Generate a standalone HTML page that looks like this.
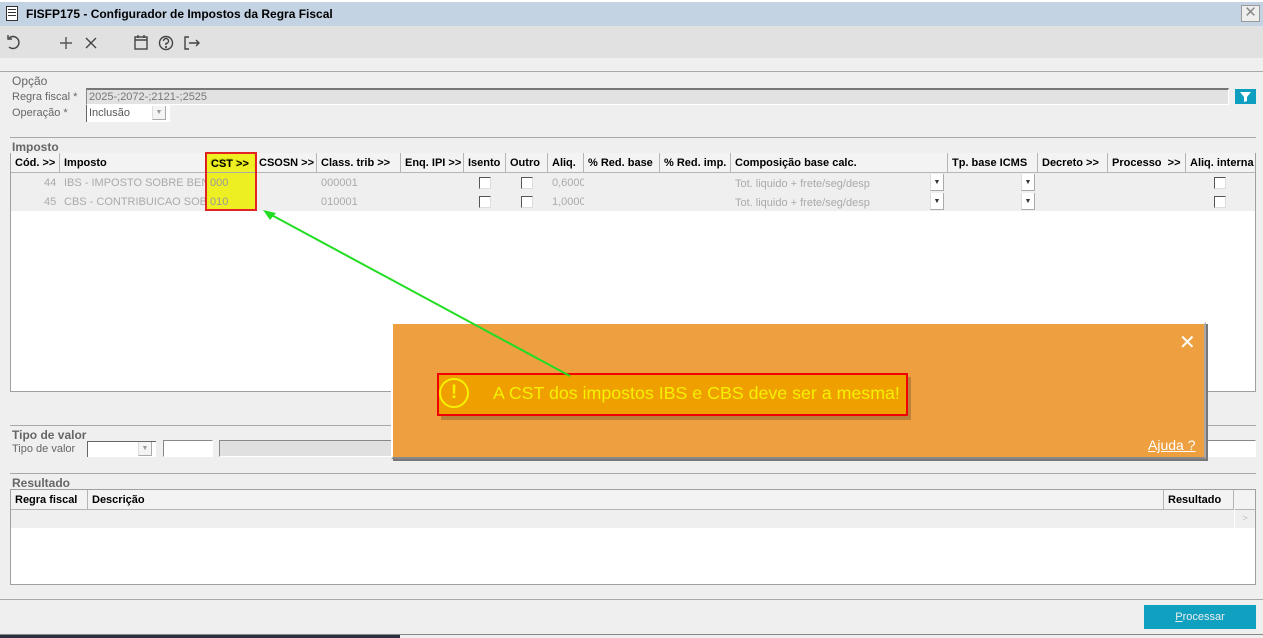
<!DOCTYPE html>
<html><head><meta charset="utf-8">
<style>
*{box-sizing:border-box;margin:0;padding:0}
body{width:1263px;height:638px;overflow:hidden;background:#efefef;font-family:"Liberation Sans",Arial,sans-serif;font-size:11px;position:relative;color:#000}
.a{position:absolute}
.lbl{color:#666;font-size:11px}
.sec{color:#666;font-size:12px;font-weight:bold}
.hr{position:absolute;height:1px;background:#a8a8a8}
.th{position:absolute;top:153px;height:20px;border-right:1px solid #b5b5b5;border-bottom:1px solid #b5b5b5;background:#f3f3f3;font-weight:bold;font-size:11px;line-height:21px;padding-left:4px;white-space:nowrap;overflow:hidden}
.cell{position:absolute;color:#aaa;font-size:11px;white-space:nowrap;overflow:hidden}
.cb{position:absolute;width:12px;height:12px;border:1px solid #555;border-right-color:#ddd;border-bottom-color:#ddd;background:#fff}
.dd{position:absolute;width:14px;height:17px;background:#fff;border-left:1px solid #ddd;border-right:1px solid #aaa;border-bottom:1px solid #aaa;font-size:7px;text-align:center;line-height:17px;color:#333}
</style></head><body>
<div class="a" style="left:0;top:0;width:1263px;height:2px;background:#fff"></div>
<div class="a" style="left:0;top:2px;width:1263px;height:24px;background:#c4d3e3"></div>
<div class="a" style="left:6px;top:6px;width:12px;height:15px;border:1px solid #333;background:#fff"></div>
<div class="a" style="left:8px;top:9px;width:8px;height:9px;background:repeating-linear-gradient(#333 0 1px,#fff 1px 3px)"></div>
<div class="a" style="left:26px;top:7px;font-size:12px;font-weight:bold">FISFP175 - Configurador de Impostos da Regra Fiscal</div>
<div class="a" style="left:1241px;top:5px;width:19px;height:17px;border:1px solid #999;background:#eee;color:#888;font-size:15px;line-height:14px;text-align:center">✕</div>
<div class="a" style="left:0;top:26px;width:1263px;height:32px;background:#e1e1e1"></div>
<svg class="a" style="left:0;top:26px" width="210" height="32" viewBox="0 0 210 32" fill="none" stroke="#444" stroke-width="1.4">
<path d="M9 12 A6 6 0 1 1 9 21"/><path d="M8 9 V13 H12"/>
<path d="M66 11 V23 M60 17 H72" stroke="#555"/>
<path d="M86 12 L96 22 M96 12 L86 22"/>
<rect x="135" y="11" width="12" height="12"/><path d="M135 14 H147 M138 9 V12 M144 9 V12"/>
<circle cx="166" cy="17" r="6.5"/><path d="M163.5 15 A2.5 2.5 0 1 1 166 17.5 V19"/><circle cx="166" cy="21" r=".4"/>
<path d="M189 11 H185 V23 H189 M189 17 H199 M196 14 L199 17 L196 20"/>
</svg>
<div class="hr" style="left:0;top:71px;width:1263px"></div>
<div class="a sec" style="left:12px;top:74px;font-weight:normal;font-size:12px">Opção</div>
<div class="a lbl" style="left:12px;top:91px">Regra fiscal *</div>
<div class="a" style="left:86px;top:88px;width:1143px;height:17px;background:#e2e2e2;border-top:2px solid #777;border-left:1px solid #888;border-right:1px solid #fff;border-bottom:1px solid #fff;color:#777;padding-left:2px;line-height:15px">2025-;2072-;2121-;2525</div>
<div class="a" style="left:1235px;top:89px;width:21px;height:15px;background:#0e9fc0"></div>
<svg class="a" style="left:1235px;top:89px" width="21" height="15"><path d="M5 3 H16 L12 8 V12 L9 13 V8 Z" fill="#fff"/></svg>
<div class="a lbl" style="left:12px;top:107px">Operação *</div>
<div class="a" style="left:86px;top:105px;width:84px;height:17px;background:#fff;border-left:1px solid #666;padding-left:2px;line-height:16px;color:#555">Inclusão</div>
<div class="dd" style="left:152px;top:106px;height:14px;line-height:14px;color:#999;background:#f4f4f4">▼</div>
<div class="hr" style="left:10px;top:137px;width:1246px"></div>
<div class="a sec" style="top:140px;left:12px">Imposto</div>
<div class="a" style="left:10px;top:153px;width:1246px;height:239px;border:1px solid #a0a0a0;background:#fff"></div>
<div class="a" style="left:11px;top:173px;width:1244px;height:38px;background:#efefef"></div>
<div class="th" style="left:11px;width:49px">Cód. &gt;&gt;</div>
<div class="th" style="left:60px;width:146px">Imposto</div>
<div class="th" style="left:206px;width:49px">CST &gt;&gt;</div>
<div class="th" style="left:255px;width:62px">CSOSN &gt;&gt;</div>
<div class="th" style="left:317px;width:84px">Class. trib &gt;&gt;</div>
<div class="th" style="left:401px;width:63px">Enq. IPI &gt;&gt;</div>
<div class="th" style="left:464px;width:42px">Isento</div>
<div class="th" style="left:506px;width:42px">Outro</div>
<div class="th" style="left:548px;width:36px">Aliq.</div>
<div class="th" style="left:584px;width:76px">% Red. base</div>
<div class="th" style="left:660px;width:71px">% Red. imp.</div>
<div class="th" style="left:731px;width:217px">Composição base calc.</div>
<div class="th" style="left:948px;width:90px">Tp. base ICMS</div>
<div class="th" style="left:1038px;width:70px">Decreto &gt;&gt;</div>
<div class="th" style="left:1108px;width:78px">Processo &nbsp;&gt;&gt;</div>
<div class="th" style="left:1186px;width:69px;border-right:none">Aliq. interna</div>
<div class="cell" style="left:44px;top:177px">44</div>
<div class="cell" style="left:64px;top:177px;width:142px">IBS - IMPOSTO SOBRE BENS</div>
<div class="cell" style="left:321px;top:177px">000001</div>
<div class="cell" style="left:552px;top:177px;width:32px">0,6000</div>
<div class="cell" style="left:735px;top:178px">Tot. liquido + frete/seg/desp</div>
<div class="cell" style="left:44px;top:196px">45</div>
<div class="cell" style="left:64px;top:196px;width:142px">CBS - CONTRIBUICAO SOBRE</div>
<div class="cell" style="left:321px;top:196px">010001</div>
<div class="cell" style="left:552px;top:196px;width:32px">1,0000</div>
<div class="cell" style="left:735px;top:197px">Tot. liquido + frete/seg/desp</div>
<div class="cb" style="left:479px;top:177px"></div><div class="cb" style="left:521px;top:177px"></div><div class="cb" style="left:1214px;top:177px"></div>
<div class="cb" style="left:479px;top:196px"></div><div class="cb" style="left:521px;top:196px"></div><div class="cb" style="left:1214px;top:196px"></div>
<div class="dd" style="left:930px;top:174px">▼</div><div class="dd" style="left:1021px;top:174px">▼</div>
<div class="dd" style="left:930px;top:193px">▼</div><div class="dd" style="left:1021px;top:193px">▼</div>
<div class="a" style="left:205px;top:152px;width:52px;height:59px;background:#eef000;opacity:.85;border:2px solid #e00000"></div>
<div class="a" style="left:207px;top:154px;width:48px;height:19px;border-bottom:1px solid #aaa;font-weight:bold;padding-left:4px;line-height:20px">CST &gt;&gt;</div>
<div class="a" style="left:210px;top:177px;color:#999">000</div>
<div class="a" style="left:210px;top:196px;color:#999">010</div>
<div class="hr" style="left:10px;top:425px;width:1246px"></div>
<div class="a sec" style="top:428px;left:12px">Tipo de valor</div>
<div class="a lbl" style="left:12px;top:443px">Tipo de valor</div>
<div class="a" style="left:87px;top:441px;width:69px;height:16px;background:#fff;border-left:1px solid #666;border-top:1px solid #666"></div>
<div class="dd" style="left:138px;top:442px;height:14px;line-height:14px;color:#999;background:#f4f4f4">▼</div>
<div class="a" style="left:163px;top:440px;width:50px;height:17px;background:#fff;border:1px solid #888;border-right-color:#fff;border-bottom-color:#fff"></div>
<div class="a" style="left:219px;top:440px;width:180px;height:17px;background:#e0e0e0;border:1px solid #888;border-right:none;border-bottom-color:#fff"></div>
<div class="a" style="left:1200px;top:440px;width:56px;height:17px;background:#fff;border:1px solid #888;border-right-color:#fff;border-bottom-color:#fff"></div>
<div class="hr" style="left:10px;top:473px;width:1246px"></div>
<div class="a sec" style="top:476px;left:12px">Resultado</div>
<div class="a" style="left:10px;top:489px;width:1246px;height:96px;border:1px solid #a0a0a0;background:#fff"></div>
<div class="a" style="left:11px;top:509px;width:1244px;height:19px;background:#efefef"></div>
<div class="th" style="top:490px;left:11px;width:77px">Regra fiscal</div>
<div class="th" style="top:490px;left:88px;width:1076px">Descrição</div>
<div class="th" style="top:490px;left:1164px;width:70px">Resultado</div>
<div class="th" style="top:490px;left:1234px;width:21px;border-right:none"></div>
<div class="a" style="left:1234px;top:509px;width:21px;height:19px;border-left:1px solid #fff;color:#bbb;font-size:9px;text-align:center;line-height:19px">&gt;</div>
<div class="hr" style="left:0;top:599px;width:1263px"></div>
<div class="a" style="left:1144px;top:605px;width:112px;height:24px;background:#10a0c0;color:#eee;text-align:center;line-height:25px;font-size:11px"><u>P</u>rocessar</div>
<div class="a" style="left:0;top:634px;width:1263px;height:1px;background:#888"></div>
<div class="a" style="left:0;top:635px;width:400px;height:3px;background:#2b2e3c"></div>
<div class="a" style="left:393px;top:324px;width:815px;height:137px;background:#777"></div>
<div class="a" style="left:391px;top:322px;width:815px;height:137px;background:#ee9f40;border:2px solid #fff;border-right-color:#aaa;border-bottom-color:#888"></div>
<div class="a" style="left:1179px;top:330px;color:#fff;font-size:20px">✕</div>
<div class="a" style="left:441px;top:377px;width:470px;height:43px;background:#5a4a30;opacity:.35"></div>
<div class="a" style="left:437px;top:373px;width:471px;height:43px;background:#ef9f00;border:2px solid #f00000"></div>
<div class="a" style="left:439px;top:378px;width:30px;height:30px;border:2px solid #f4f000;border-radius:50%;color:#f4f000;font-size:19px;font-weight:bold;text-align:center;line-height:26px">!</div>
<div class="a" style="left:493px;top:383px;color:#f4f000;font-size:17.8px">A CST dos impostos IBS e CBS deve ser a mesma!</div>
<div class="a" style="left:1148px;top:437px;color:#fff;font-size:14px;text-decoration:underline">Ajuda ?</div>
<svg class="a" style="left:0;top:0" width="1263" height="638"><path d="M570 376 L266 212" stroke="#22dd22" stroke-width="2"/><path d="M263 210 L276 213 L270 220 Z" fill="#22dd22"/></svg>
</body></html>
